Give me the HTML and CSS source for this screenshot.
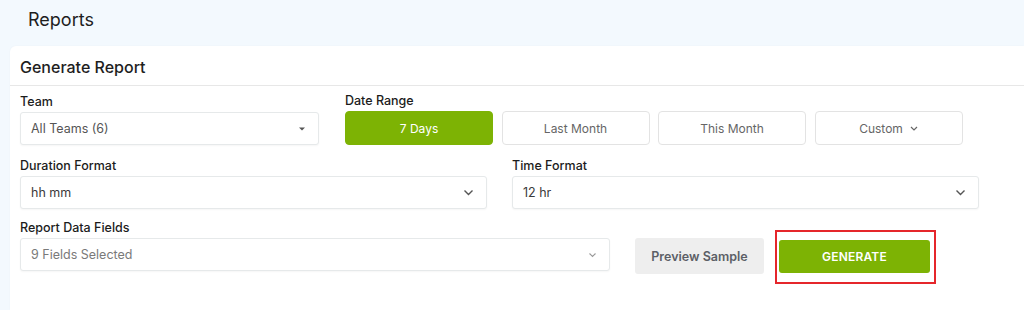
FILE: index.html
```html
<!DOCTYPE html>
<html>
<head>
<meta charset="utf-8">
<link rel="stylesheet" href="styles.css">
</head>
<body>
<div class="page">
  <h1 class="page-title">Reports</h1>
  <section class="card">
    <div class="card-head">Generate Report</div>
    <div class="form">
      <div class="row row-1">
        <div class="field team">
          <label class="label">Team</label>
          <div class="select">
            <span>All Teams (6)</span>
            <svg class="caret-solid" width="8" height="4" viewBox="0 0 8 4"><path d="M1 0.5 L7 0.5 L4 3.5 Z" fill="#555"/></svg>
          </div>
        </div>
        <div class="field range">
          <label class="label">Date Range</label>
          <div class="range-btns">
            <button class="seg active">7 Days</button>
            <button class="seg">Last Month</button>
            <button class="seg">This Month</button>
            <button class="seg">Custom <svg class="chev-sm" width="8" height="5" viewBox="0 0 8 5"><path d="M1 1 L4 4 L7 1" fill="none" stroke="#666" stroke-width="1.2"/></svg></button>
          </div>
        </div>
      </div>
      <div class="row row-2">
        <div class="field">
          <label class="label">Duration Format</label>
          <div class="select">
            <span class="dark">hh mm</span>
            <svg class="chev" width="11" height="7" viewBox="0 0 11 7"><path d="M1.5 1.5 L5.5 5.5 L9.5 1.5" fill="none" stroke="#555" stroke-width="1.4"/></svg>
          </div>
        </div>
        <div class="field">
          <label class="label">Time Format</label>
          <div class="select">
            <span class="dark">12 hr</span>
            <svg class="chev" width="11" height="7" viewBox="0 0 11 7"><path d="M1.5 1.5 L5.5 5.5 L9.5 1.5" fill="none" stroke="#555" stroke-width="1.4"/></svg>
          </div>
        </div>
      </div>
      <div class="row row-3">
        <div class="field fields">
          <label class="label">Report Data Fields</label>
          <div class="select">
            <span class="muted">9 Fields Selected</span>
            <svg class="chev-sm" width="9" height="6" viewBox="0 0 9 6"><path d="M1.5 1.5 L4.5 4.5 L7.5 1.5" fill="none" stroke="#999" stroke-width="1.1"/></svg>
          </div>
        </div>
        <button class="preview">Preview Sample</button>
        <div class="highlight">
          <button class="generate">GENERATE</button>
        </div>
      </div>
    </div>
  </section>
</div>
</body>
</html>
```

FILE: styles.css
```css
* { box-sizing: border-box; }
html, body {
  margin: 0;
  padding: 0;
  background: #f3f9fe;
  overflow: hidden;
}
body {
  font-family: "Inter", "Open Sans", sans-serif;
  color: #222;
  width: 1024px;
  height: 310px;
}
.page {
  padding-top: 8px;
}
.page-title {
  margin: 0 0 14px 28px;
  font-size: 18px;
  font-weight: 400;
  line-height: 24px;
  color: #1e1e1e;
}
.card {
  margin-left: 10px;
  width: 1014px;
  height: 264px;
  background: #ffffff;
  border-radius: 6px 0 0 0;
  box-shadow: 0 0 2px rgba(0,0,0,0.04);
}
.card-head {
  height: 40px;
  padding: 11px 0 0 10px;
  font-size: 16px;
  font-weight: 500;
  line-height: 20px;
  color: #1e1e1e;
  border-bottom: 1px solid #e7e7e7;
}
.form {
  padding: 7px 0 0 10px;
  display: flex;
  flex-direction: column;
  gap: 13px;
}
.row {
  display: flex;
  align-items: flex-end;
}
.row-3 { margin-top: -2px; }
.field {
  display: flex;
  flex-direction: column;
}
.label {
  font-size: 12.5px;
  font-weight: 500;
  line-height: 16px;
  color: #1c1c1c;
  margin-bottom: 2px;
}
.select {
  height: 33px;
  display: flex;
  align-items: center;
  justify-content: space-between;
  padding: 0 12px 0 10px;
  border: 1px solid #e6e9ea;
  border-radius: 3px;
  background: #fff;
  box-shadow: 0 1px 2px rgba(0,0,0,0.04);
  font-size: 12.5px;
  color: #555;
}
.select .dark { color: #3a3a3a; }
.select .muted { color: #7a7a7a; }
.team { width: 299px; margin-right: 26px; }
.range-btns {
  display: flex;
  gap: 8.5px;
}
.seg {
  width: 148px;
  height: 34px;
  border: 1px solid #e3e3e3;
  border-radius: 4px;
  background: #fff;
  font-family: inherit;
  font-size: 12px;
  color: #666;
  display: flex;
  align-items: center;
  justify-content: center;
  gap: 7px;
  padding: 0;
}
.seg.active {
  background: #7db304;
  border-color: #7db304;
  color: #fff;
}
.row-2 { gap: 25px; }
.row-2 .field { width: 467px; }
.fields { width: 590px; margin-right: 25px; }
.preview {
  width: 129px;
  height: 36px;
  border: none;
  border-radius: 3px;
  background: #eeeeee;
  font-family: inherit;
  font-size: 12.5px;
  font-weight: 600;
  color: #5c5f66;
  margin-bottom: -3px;
}
.highlight {
  margin-left: 11px;
  border: 2px solid #e5262b;
  padding: 8px 4px 9px 2px;
  margin-bottom: -13px;
}
.generate {
  display: block;
  width: 151px;
  height: 33px;
  border: none;
  border-radius: 3px;
  background: #7db304;
  color: #fff;
  font-family: inherit;
  font-size: 12px;
  font-weight: 600;
  letter-spacing: 0.2px;
}
```
